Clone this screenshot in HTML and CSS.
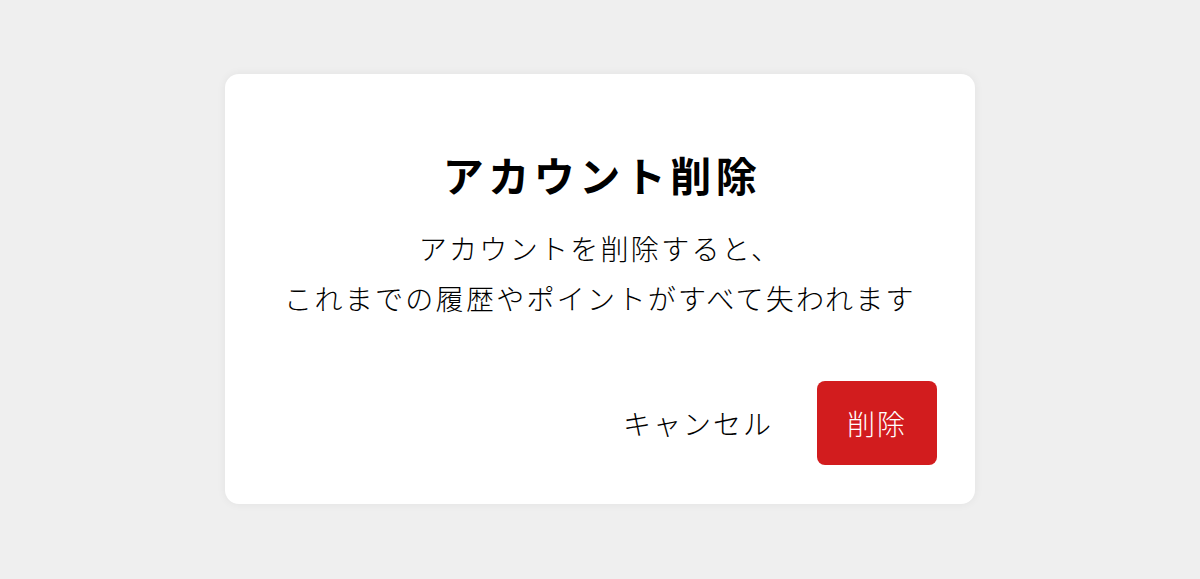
FILE: index.html
```html
<!DOCTYPE html>
<html lang="ja">
<head>
<meta charset="UTF-8">
<title>アカウント削除</title>
<meta name="viewport" content="width=device-width, initial-scale=1">
<link rel="stylesheet" href="styles.css">
</head>
<body>

<div class="overlay">
<div class="dialog">

<div class="title">アカウント削除</div>

<div class="message">
<div>アカウントを削除すると、</div>
<div>これまでの履歴やポイントがすべて失われます</div>
</div>

<div class="actions">
<button class="btn cancel">キャンセル</button>
<button class="btn danger">削除</button>
</div>

</div>
</div>

</body>
</html>
```

FILE: styles.css
```css
body{
margin:0;
background:#efefef;
font-family:"Noto Sans CJK JP","Noto Sans",sans-serif;
color:#000;
}

.overlay{
height:579px;
display:flex;
justify-content:center;
align-items:flex-start;
}

.dialog{
margin-top:74px;
width:750px;
box-sizing:border-box;
height:430px;
background:#fff;
border-radius:14px;
box-shadow:0 0 10px rgba(0,0,0,0.06);
padding:70px 38px 39px;
display:flex;
flex-direction:column;
}

.title{
text-align:center;
font-size:41px;
font-weight:bold;
line-height:60px;
letter-spacing:4.5px;
padding-left:4px;
}

.message{
margin-top:19px;
text-align:center;
font-size:28px;
font-weight:300;
line-height:50px;
letter-spacing:2.3px;
}

.actions{
margin-top:auto;
display:flex;
justify-content:flex-end;
align-items:center;
gap:44px;
}

.btn{
font-family:inherit;
font-size:28px;
font-weight:300;
letter-spacing:2px;
border:none;
background:none;
cursor:pointer;
padding:0;
}

.cancel{
color:#000;
}

.danger{
width:120px;
height:84px;
background:#d21c1e;
color:#fff;
border-radius:8px;
}
```
